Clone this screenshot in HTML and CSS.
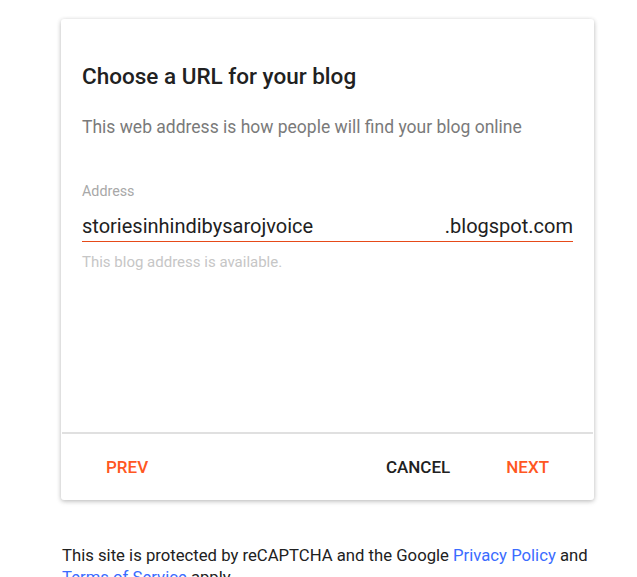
FILE: index.html
```html
<!DOCTYPE html>
<html>
<head>
<meta charset="utf-8">
<link rel="stylesheet" href="styles.css">
</head>
<body>
<div class="page">
  <div class="card">
    <div class="content">
      <h1 class="title">Choose a URL for your blog</h1>
      <p class="subtitle">This web address is how people will find your blog online</p>
      <div class="field">
        <div class="label">Address</div>
        <div class="input-row">
          <span class="value">storiesinhindibysarojvoice</span>
          <span class="suffix">.blogspot.com</span>
        </div>
        <div class="helper">This blog address is available.</div>
      </div>
    </div>
    <div class="actions">
      <span class="btn accent">PREV</span>
      <span class="spacer"></span>
      <span class="btn">CANCEL</span>
      <span class="btn accent">NEXT</span>
    </div>
  </div>
  <p class="legal">This site is protected by reCAPTCHA and the Google <a href="#">Privacy Policy</a> and <a href="#">Terms of Service</a> apply.</p>
</div>
</body>
</html>
```
FILE: styles.css
```css
html, body {
  margin: 0;
  padding: 0;
  background: #fff;
  font-family: Roboto, "Liberation Sans", Arial, sans-serif;
  overflow: hidden;
}
.page {
  padding: 19px 43px 0 61px;
}
.card {
  width: 533px;
  height: 481px;
  box-sizing: border-box;
  background: #fff;
  border-radius: 3px;
  box-shadow: 0 1px 4px rgba(0,0,0,0.22), 0 2px 6px rgba(0,0,0,0.08);
  display: flex;
  flex-direction: column;
}
.content {
  flex: 1;
  padding: 43px 21px 0 21px;
}
.title {
  margin: 0;
  font-size: 22.5px;
  line-height: 28px;
  font-weight: 500;
  color: #212121;
}
.subtitle {
  margin: 25px 0 0;
  font-size: 17.5px;
  line-height: 24px;
  color: #7a7a7a;
}
.field {
  margin-top: 43px;
}
.label {
  font-size: 14.3px;
  line-height: 18px;
  color: #a8a8a8;
}
.input-row {
  display: flex;
  justify-content: space-between;
  margin-top: 13px;
  padding-bottom: 2px;
  border-bottom: 1px solid #e64a19;
  font-size: 20px;
  line-height: 26px;
  color: #212121;
}
.helper {
  margin-top: 11px;
  font-size: 15px;
  line-height: 18px;
  color: #c6c6c6;
}
.actions {
  border-top: 2px solid #e0e0e0;
  height: 66px;
  display: flex;
  align-items: center;
  padding: 0 44px 0 44px;
  margin: 0 1px;
}
.spacer { flex: 1; }
.btn {
  font-size: 17px;
  font-weight: 500;
  color: #212121;
  text-transform: uppercase;
}
.btn + .btn { margin-left: 56px; }
.accent { color: #ff5722; }
.legal {
  margin: 45px 0 0 1px;
  font-size: 16.7px;
  line-height: 22px;
  color: #212121;
}
.legal a {
  color: #3b6cff;
  text-decoration: none;
}
```
